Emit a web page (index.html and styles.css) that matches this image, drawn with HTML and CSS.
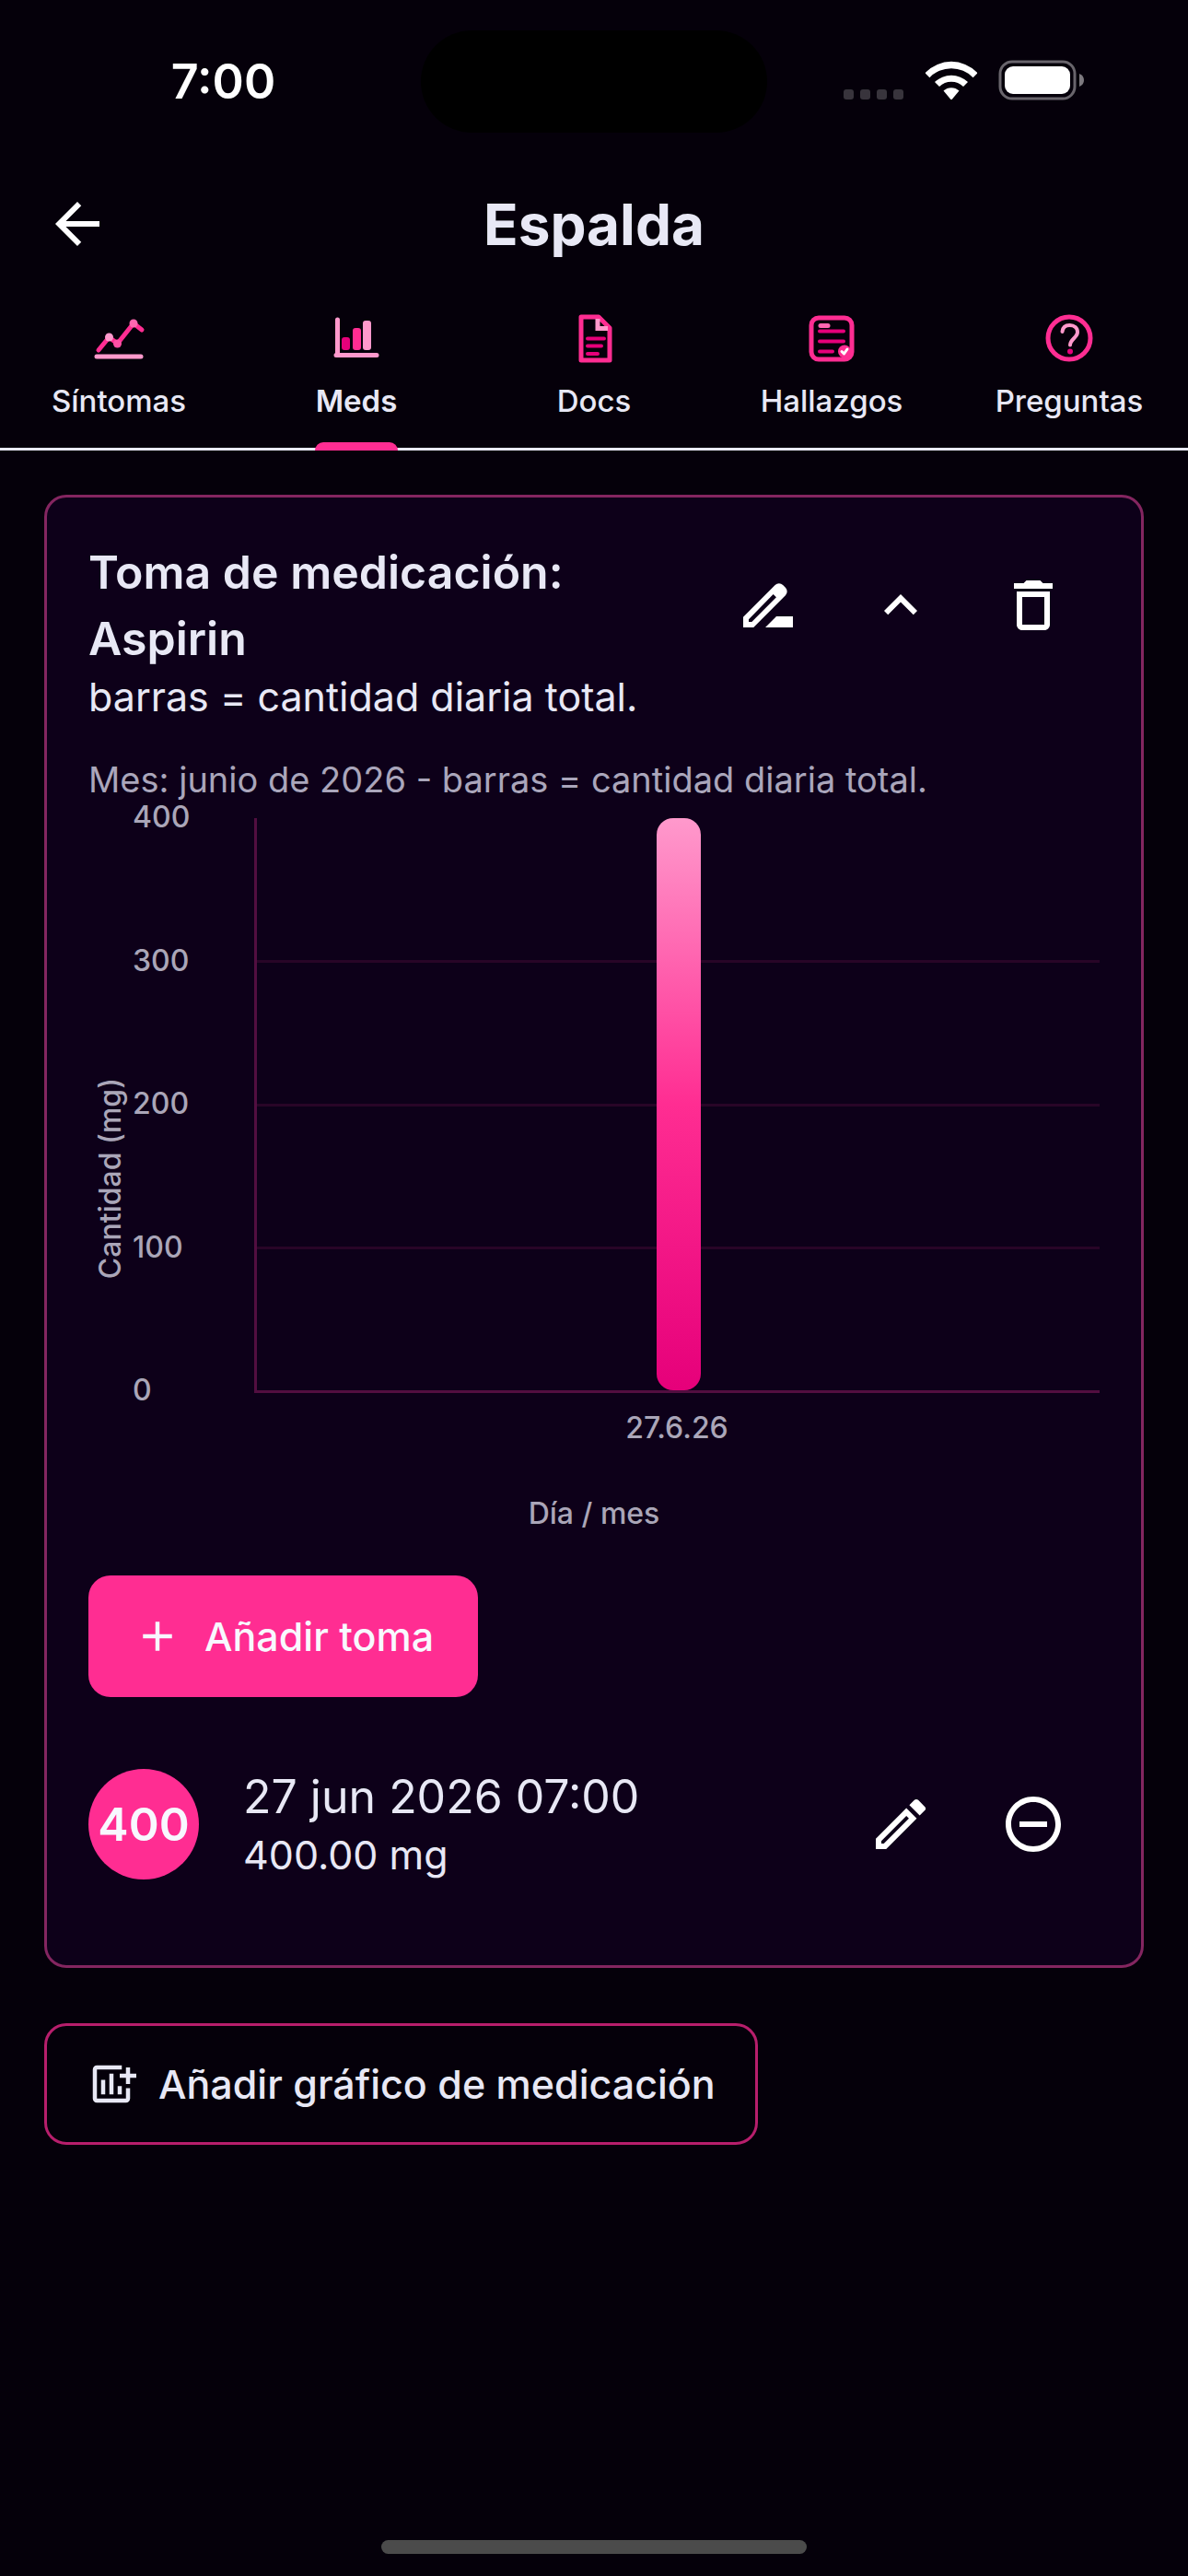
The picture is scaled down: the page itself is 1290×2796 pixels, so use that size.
FILE: index.html
```html
<!DOCTYPE html>
<html lang="es">
<head>
    <meta charset="UTF-8">
    <meta name="viewport" content="width=device-width, initial-scale=1">
    <title>Espalda</title>
    <link rel="stylesheet" href="styles.css">
</head>
<body>

    <!-- Barra de estado -->
    <div class="status-bar">
        <div class="status-time">7:00</div>
        <div class="island"></div>
        <div class="status-icons">
            <svg width="66" height="44" viewBox="0 0 66 44" fill="#38343c">
                <rect x="0" y="32" width="11" height="11" rx="3"/>
                <rect x="18" y="32" width="11" height="11" rx="3"/>
                <rect x="36" y="32" width="11" height="11" rx="3"/>
                <rect x="54" y="32" width="11" height="11" rx="3"/>
            </svg>
            <svg width="58" height="44" viewBox="0 0 58 44" fill="#fff">
                <path d="M1.200 13.500A39 39 0 0 1 56.800 13.500Q57.500 14.300 56.800 15L52.600 19.200A33 33 0 0 0 5.400 19.200L1.200 15Q.5 14.300 1.200 13.500z"/>
                <path d="M11 24A26 26 0 0 1 47 24L42 29A19 19 0 0 0 16 29z"/>
                <path d="M20.500 33.500A12.500 12.500 0 0 1 37.500 33.500L30 42.500Q29 43.500 28 42.500z"/>
            </svg>
            <svg width="94" height="44" viewBox="0 0 94 44">
                <rect x="2" y="2" width="81" height="40" rx="13" fill="none" stroke="#69656c" stroke-width="3"/>
                <rect x="7" y="7" width="71" height="30" rx="9" fill="#fff"/>
                <path d="M88 15Q93 17 93 22Q93 27 88 29z" fill="#7d797f"/>
            </svg>
        </div>
    </div>

    <header class="app-bar">
        <button class="icon-btn back" aria-label="Atrás">
            <svg class="icon" viewBox="0 0 24 24"><path d="M20 11H7.830l5.590-5.590L12 4l-8 8 8 8 1.410-1.410L7.830 13H20v-2z"/></svg>
        </button>
        <h1>Espalda</h1>
    </header>

    <nav class="tabs">
        <a href="#sintomas" class="tab">
            <svg class="tab-icon" viewBox="0 0 60 60">
                <path d="M6 50H54" stroke="#ff99cc"/>
                <path d="M8 43L19.500 29L28.500 36L46 14L55 21" stroke="#ff2d92"/>
                <circle cx="19.500" cy="29" r="4.500" fill="#ff99cc"/>
                <circle cx="28.500" cy="36" r="4.500" fill="#ff4fa5"/>
                <circle cx="46" cy="14" r="4.500" fill="#ff66b0"/>
            </svg>
            <span>Síntomas</span>
        </a>
        <a href="#meds" class="tab active">
            <svg class="tab-icon" viewBox="0 0 60 60">
                <path d="M9.500 10V48M8 48.500H52" stroke="#ff99cc"/>
                <rect x="14" y="29" width="9" height="14" rx="3" fill="#e6007a"/>
                <rect x="26" y="19" width="9" height="24" rx="3" fill="#ff2d92"/>
                <rect x="37" y="11" width="9" height="32" rx="3" fill="#ff99cc"/>
            </svg>
            <span>Meds</span>
        </a>
        <a href="#docs" class="tab">
            <svg class="tab-icon" viewBox="0 0 60 60">
                <path d="M16 7H35L47 19V54H16z" stroke="#ff2d92"/>
                <path d="M34 9V19.500H45" stroke="#ff99cc" stroke-linecap="butt" stroke-linejoin="miter"/>
                <path d="M23 30.500H41M23 38.500H38M23 47H34" stroke="#e6007a" stroke-width="4"/>
            </svg>
            <span>Docs</span>
        </a>
        <a href="#hallazgos" class="tab">
            <svg class="tab-icon" viewBox="0 0 60 60">
                <rect x="8" y="8" width="44" height="45" rx="8" stroke="#ff2d92"/>
                <path d="M18 16.500H26" stroke="#ff66b0"/>
                <path d="M17 22.500H43M17 33.500H43M17 44.500H31" stroke="#e6007a" stroke-width="4"/>
                <circle cx="44" cy="44.500" r="7" fill="#ff2d92"/>
                <path d="M41 44.500L43.500 47L47 42" stroke="#fff" stroke-width="3"/>
            </svg>
            <span>Hallazgos</span>
        </a>
        <a href="#preguntas" class="tab">
            <svg class="tab-icon" viewBox="0 0 60 60">
                <circle cx="30" cy="30" r="23" stroke="#ff2d92"/>
                <path d="M22.500 23C23 18 26 16 30.500 16C35.500 16 39 19 39 23.500C39 29.500 31 31 31 37.500" stroke="#ff99cc" stroke-width="4"/>
                <circle cx="31" cy="44.500" r="3" fill="#e6007a"/>
            </svg>
            <span>Preguntas</span>
        </a>
    </nav>

    <main>
        <section class="card">
            <div class="card-header">
                <h2>Toma de medicación: Aspirin</h2>
                <button class="icon-btn" aria-label="Renombrar">
                    <svg class="icon" viewBox="0 0 24 24"><path fill-rule="evenodd" d="M15 16l-4 4h10v-4zM3 16.250V20h3.750L18.300 8.450a2 2 0 0 0 0-2.830l-.920-.920a2 2 0 0 0-2.830 0zM5 17.080V18h1.100l8.880-8.880-1.100-1.100z"/></svg>
                </button>
                <button class="icon-btn" aria-label="Contraer">
                    <svg class="icon" viewBox="0 0 24 24"><path d="M12 8l-6 6 1.410 1.410L12 10.830l4.590 4.580L18 14z"/></svg>
                </button>
                <button class="icon-btn" aria-label="Eliminar gráfico">
                    <svg class="icon" viewBox="0 0 24 24"><path d="M6 19c0 1.100.900 2 2 2h8c1.100 0 2-.900 2-2V7H6v12zM8 9h8v10H8V9zm7.500-5l-1-1h-5l-1 1H5v2h14V4h-3.500z"/></svg>
                </button>
            </div>
            <p class="subtitle">barras = cantidad diaria total.</p>
            <p class="month">Mes: junio de 2026 - barras = cantidad diaria total.</p>

            <!-- Gráfico de barras -->
            <div class="chart">
                <div class="y-title">Cantidad (mg)</div>
                <div class="y-ticks">
                    <span>400</span>
                    <span>300</span>
                    <span>200</span>
                    <span>100</span>
                    <span>0</span>
                </div>
                <div class="plot">
                    <div class="lines"><div></div><div></div><div></div><div></div></div>
                    <div class="bars"><div class="bar" style="height: 100%"></div></div>
                </div>
                <div class="x-ticks">27.6.26</div>
                <div class="x-title">Día / mes</div>
            </div>

            <button class="btn btn-filled">
                <svg class="btn-icon" viewBox="0 0 24 24"><path d="M19 13h-6v6h-2v-6H5v-2h6V5h2v6h6v2z"/></svg>
                Añadir toma
            </button>

            <div class="entry">
                <div class="avatar">400</div>
                <div class="entry-text">
                    <div class="entry-date">27 jun 2026 07:00</div>
                    <div class="entry-dose">400.00 mg</div>
                </div>
                <button class="icon-btn" aria-label="Editar toma">
                    <svg class="icon" viewBox="0 0 24 24"><path d="M14.060 9.020l.920.920L5.920 19H5v-.920l9.060-9.060M17.660 3c-.250 0-.510.100-.700.290l-1.830 1.830 3.750 3.750 1.830-1.830a.996.996 0 0 0 0-1.410l-2.340-2.340c-.200-.200-.450-.290-.710-.290zm-3.600 3.190L3 17.250V21h3.750L17.810 9.940l-3.750-3.750z"/></svg>
                </button>
                <button class="icon-btn" aria-label="Quitar toma">
                    <svg class="icon" viewBox="0 0 24 24"><path d="M7 11v2h10v-2H7zm5-9C6.480 2 2 6.480 2 12s4.480 10 10 10 10-4.480 10-10S17.520 2 12 2zm0 18c-4.410 0-8-3.590-8-8s3.590-8 8-8 8 3.590 8 8-3.590 8-8 8z"/></svg>
                </button>
            </div>
        </section>

        <button class="btn btn-outlined">
            <svg class="btn-icon" viewBox="0 0 24 24"><path d="M17 3H5c-1.100 0-2 .900-2 2v14c0 1.100.900 2 2 2h14c1.100 0 2-.900 2-2v-5h-2v5H5V5h12zM7 10h2v7H7zM11 7h2v10h-2zM15 13h2v4h-2zM19 4h2v3h3v2h-3v3h-2V9h-3V7h3z"/></svg>
            Añadir gráfico de medicación
        </button>
    </main>

    <div class="home-bar"></div>

</body>
</html>
```

FILE: styles.css
```css
* {
    box-sizing: border-box;
}
body {
    font-family: Inter, "Liberation Sans", sans-serif;
    background: #05000a;
    color: #e8e8f5;
    margin: 0;
    min-height: 100vh;
    display: flex;
    flex-direction: column;
}
h1, h2, p {
    margin: 0;
}
button {
    font-family: inherit;
    border: none;
    background: none;
    padding: 0;
    cursor: pointer;
}
svg {
    display: block;
    overflow: visible;
}

/* Barra de estado */
.status-bar {
    display: grid;
    grid-template-columns: 1fr 376px 1fr;
    align-items: center;
    height: 177px;
}
.status-time {
    font-size: 52px;
    font-weight: 600;
    color: white;
    padding-left: 28px;
    text-align: center;
}
.island {
    height: 111px;
    border-radius: 56px;
    background: black;
}
.status-icons {
    display: flex;
    gap: 22px;
    justify-content: flex-end;
    padding: 0 112px 4px 0;
}

.app-bar {
    display: grid;
    grid-template-columns: 144px 1fr 144px;
    align-items: center;
    height: 132px;
    padding: 0 12px;
}
.app-bar h1 {
    font-size: 62px;
    font-weight: 700;
    text-align: center;
}
.icon-btn {
    display: flex;
    align-items: center;
    justify-content: center;
    width: 144px;
    height: 144px;
    flex-shrink: 0;
}
.app-bar .icon-btn {
    height: 120px;
}
.icon {
    width: 72px;
    height: 72px;
    fill: white;
}

.tabs {
    display: grid;
    grid-template-columns: repeat(5, 1fr);
    height: 180px;
    border-bottom: 3px solid #e8e8f5;
}
.tab {
    position: relative;
    display: flex;
    flex-direction: column;
    align-items: center;
    gap: 18px;
    padding-top: 28px;
    font-size: 33px;
    line-height: 40px;
    font-weight: 500;
    color: #e8e8f5;
    text-decoration: none;
}
.tab.active {
    font-weight: 600;
}
.tab.active::after {
    content: "";
    position: absolute;
    bottom: -3px;
    width: 90px;
    height: 9px;
    border-radius: 9px 9px 0 0;
    background: #ff2d92;
}
.tab-icon {
    width: 60px;
    height: 60px;
    fill: none;
    stroke-width: 5;
    stroke-linecap: round;
    stroke-linejoin: round;
}

main {
    flex: 1;
    padding: 48px;
}
.card {
    padding: 45px 45px 81px;
    border: 3px solid #842560;
    border-radius: 24px;
    background: #0d0019;
}
.card-header {
    display: flex;
    align-items: center;
}
.card-header h2 {
    flex: 1;
    font-size: 50px;
    line-height: 72px;
    font-weight: 600;
}
.subtitle {
    font-size: 43px;
    line-height: 54px;
}
.month {
    margin-top: 36px;
    font-size: 38px;
    line-height: 54px;
    color: #aaa6bb;
}

/* Gráfico */
.chart {
    display: grid;
    grid-template-columns: 48px 132px 1fr;
    grid-template-rows: 624px 78px 80px;
    margin-top: 15px;
    font-size: 32px;
    line-height: 36px;
    font-weight: 500;
    color: #aaa6b8;
}
.y-title {
    grid-area: 1 / 1 / 4 / 2;
    place-self: center;
    writing-mode: vertical-rl;
    transform: rotate(180deg);
}
.y-ticks {
    grid-area: 1 / 2;
    display: flex;
    flex-direction: column;
    justify-content: space-between;
    margin: -19px 0 -15px;
}
.plot {
    grid-area: 1 / 3;
    display: grid;
    border-left: 3px solid #520e40;
    border-bottom: 3px solid #520e40;
}
.lines {
    grid-area: 1 / 1;
    display: grid;
    grid-template-rows: repeat(4, 1fr);
    margin-top: -2px;
}
.lines div + div {
    border-top: 3px solid #280527;
}
.bars {
    grid-area: 1 / 1;
    display: flex;
    justify-content: center;
    align-items: flex-end;
}
.bar {
    width: 48px;
    border-radius: 18px;
    background: linear-gradient(#ff99cc, #ff2d92 50%, #e6007a);
}
.x-ticks {
    grid-area: 2 / 3;
    padding-top: 20px;
    text-align: center;
}
.x-title {
    grid-area: 3 / 1 / 4 / 4;
    padding-top: 35px;
    text-align: center;
}

.btn {
    display: flex;
    align-items: center;
    gap: 24px;
    height: 132px;
    border-radius: 24px;
    font-size: 43px;
    font-weight: 500;
    white-space: nowrap;
}
.btn-icon {
    width: 54px;
    height: 54px;
    fill: currentColor;
}
.btn-filled {
    margin-top: 40px;
    padding: 0 48px;
    background: #ff2d92;
    color: #f8f8ff;
}
.btn-outlined {
    margin-top: 60px;
    padding: 0 43px;
    border: 3px solid #b71e6c;
    color: #e8e8f5;
}

.entry {
    display: flex;
    align-items: center;
    margin-top: 66px;
}
.avatar {
    display: flex;
    align-items: center;
    justify-content: center;
    width: 120px;
    height: 120px;
    border-radius: 50%;
    background: #ff2d92;
    color: #f8f8ff;
    font-size: 50px;
    font-weight: 600;
}
.entry-text {
    flex: 1;
    padding-left: 48px;
}
.entry-date {
    font-size: 50px;
    line-height: 66px;
}
.entry-dose {
    font-size: 43px;
    line-height: 60px;
}

.home-bar {
    width: 462px;
    height: 15px;
    margin: 0 auto 24px;
    border-radius: 8px;
    background: #4b4b4b;
}
```
